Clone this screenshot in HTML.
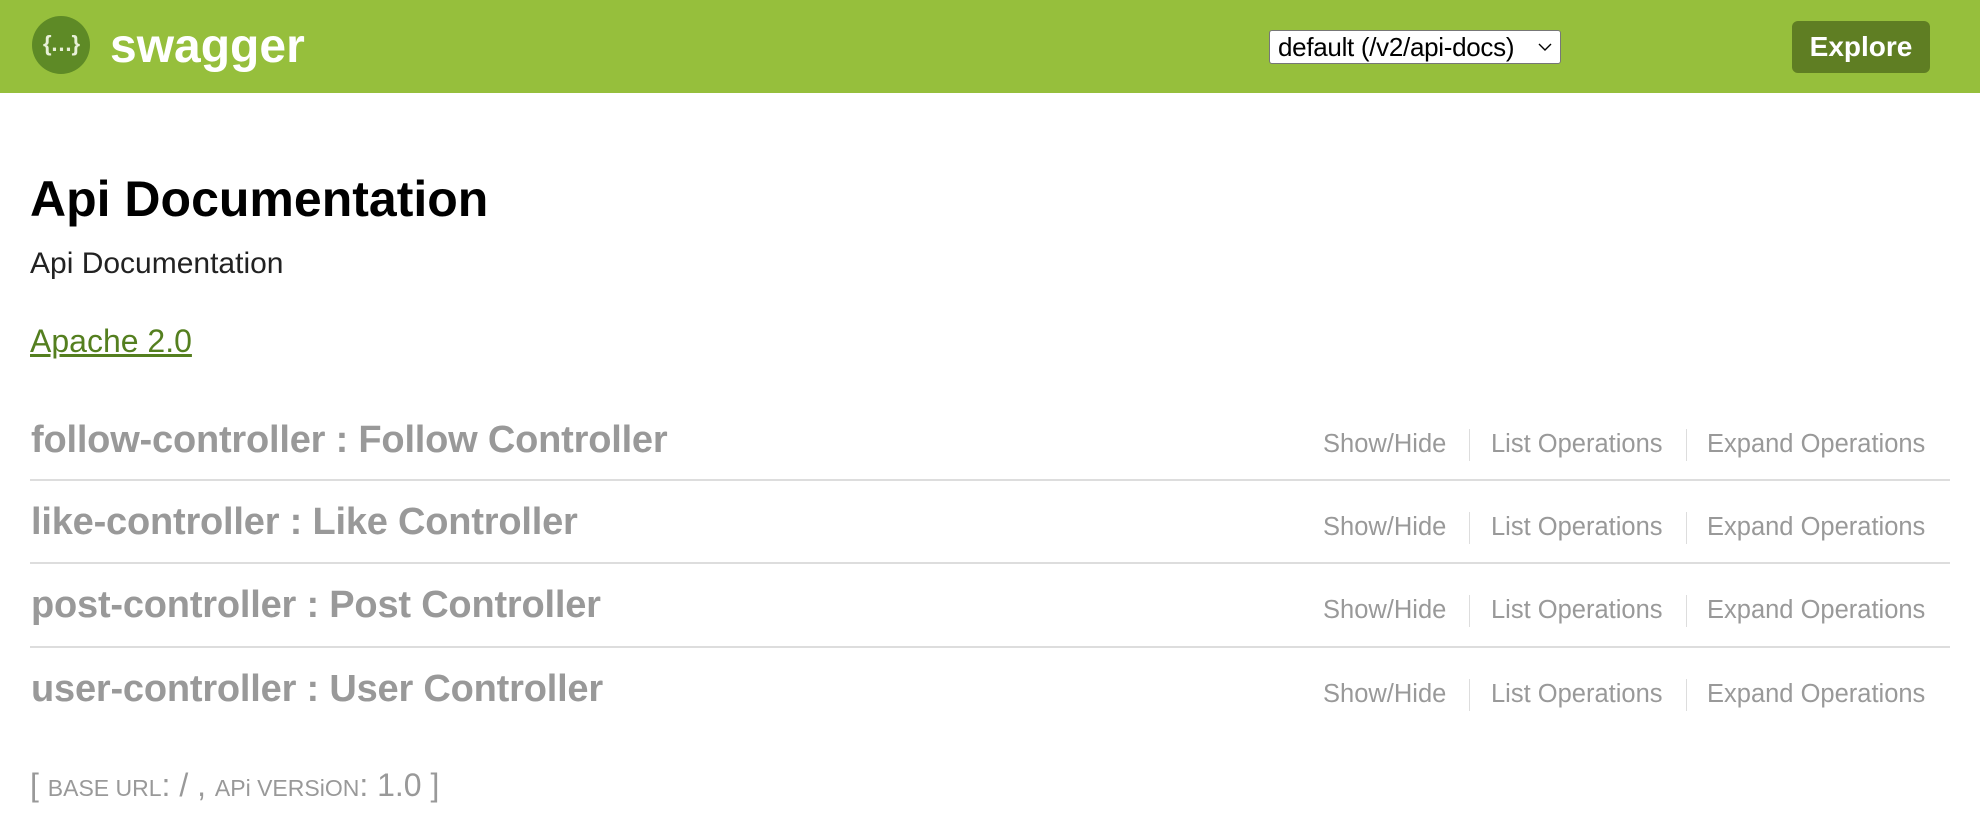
<!DOCTYPE html>
<html><head><meta charset="utf-8"><style>
*{margin:0;padding:0;box-sizing:border-box}
body{width:1980px;height:826px;background:#fff;font-family:"Liberation Sans",Arial,sans-serif;position:relative;overflow:hidden}
.hdr{position:absolute;left:0;top:0;width:1980px;height:93px;background:#96bf3c}
.logo{position:absolute;left:32px;top:16px;width:58px;height:58px;border-radius:50%;background:#5e8a26;color:#e8f0d8;font-size:22px;font-weight:bold;text-align:center;line-height:56px;letter-spacing:-1px}
.brand{position:absolute;left:110px;top:12px;font-size:48px;font-weight:bold;color:#fff;line-height:70px}
.sel{position:absolute;left:1269px;top:30px;width:292px;height:34px;background:#fff;border:1px solid #777;border-radius:3px;font-size:26px;line-height:32px;padding-left:8px;color:#000;letter-spacing:-0.3px;white-space:nowrap}
.sel svg{position:absolute;right:8px;top:12px}
.btn{position:absolute;left:1792px;top:21px;width:138px;height:52px;background:#5f7e23;border-radius:6px;color:#fff;font-weight:bold;font-size:28px;text-align:center;line-height:52px}
.t{position:absolute;left:30px;white-space:nowrap}
h1.t{font-size:50px;font-weight:bold;color:#000;top:169px;line-height:60px}
.desc{font-size:30px;color:#222;top:246px;line-height:36px}
.lic{font-size:32px;color:#547f1f;text-decoration:underline;top:321px;line-height:40px}
.ctl{font-size:38px;font-weight:bold;color:#999;line-height:44px;letter-spacing:-0.2px}
.sep{position:absolute;left:30px;width:1920px;height:2px;background:#ddd}
.ops{position:absolute;font-size:25.5px;color:#999;line-height:32px;white-space:nowrap}
.div{position:absolute;width:1px;height:32px;background:#ddd}
.foot{font-size:32px;color:#999;top:766px;line-height:38px}
.sc{font-size:23px}
</style></head><body>
<div class="hdr">
<div class="logo">{…}</div>
<div class="brand">swagger</div>
<div class="sel">default (/v2/api-docs)<svg width="14" height="9" viewBox="0 0 14 9"><path d="M1 1 L7 7 L13 1" fill="none" stroke="#000" stroke-width="1.4"/></svg></div>
<div class="btn">Explore</div>
</div>
<h1 class="t">Api Documentation</h1>
<div class="t desc">Api Documentation</div>
<div class="t lic">Apache 2.0</div>

<div class="t ctl" style="left:31px;top:418px">follow-controller : Follow Controller</div>
<div class="sep" style="top:479px"></div>
<div class="t ctl" style="left:31px;top:500px">like-controller : Like Controller</div>
<div class="sep" style="top:562px"></div>
<div class="t ctl" style="left:31px;top:583px">post-controller : Post Controller</div>
<div class="sep" style="top:646px"></div>
<div class="t ctl" style="left:31px;top:667px">user-controller : User Controller</div>

<div class="ops" style="left:1323px;top:428px">Show/Hide</div><div class="div" style="left:1469px;top:429px"></div>
<div class="ops" style="left:1491px;top:428px">List Operations</div><div class="div" style="left:1686px;top:429px"></div>
<div class="ops" style="left:1707px;top:428px">Expand Operations</div>

<div class="ops" style="left:1323px;top:511px">Show/Hide</div><div class="div" style="left:1469px;top:512px"></div>
<div class="ops" style="left:1491px;top:511px">List Operations</div><div class="div" style="left:1686px;top:512px"></div>
<div class="ops" style="left:1707px;top:511px">Expand Operations</div>

<div class="ops" style="left:1323px;top:594px">Show/Hide</div><div class="div" style="left:1469px;top:595px"></div>
<div class="ops" style="left:1491px;top:594px">List Operations</div><div class="div" style="left:1686px;top:595px"></div>
<div class="ops" style="left:1707px;top:594px">Expand Operations</div>

<div class="ops" style="left:1323px;top:678px">Show/Hide</div><div class="div" style="left:1469px;top:679px"></div>
<div class="ops" style="left:1491px;top:678px">List Operations</div><div class="div" style="left:1686px;top:679px"></div>
<div class="ops" style="left:1707px;top:678px">Expand Operations</div>

<div class="t foot">[ <span class="sc">BASE URL</span>: / , <span class="sc">APi VERSiON</span>: 1.0 ]</div>
</body></html>
